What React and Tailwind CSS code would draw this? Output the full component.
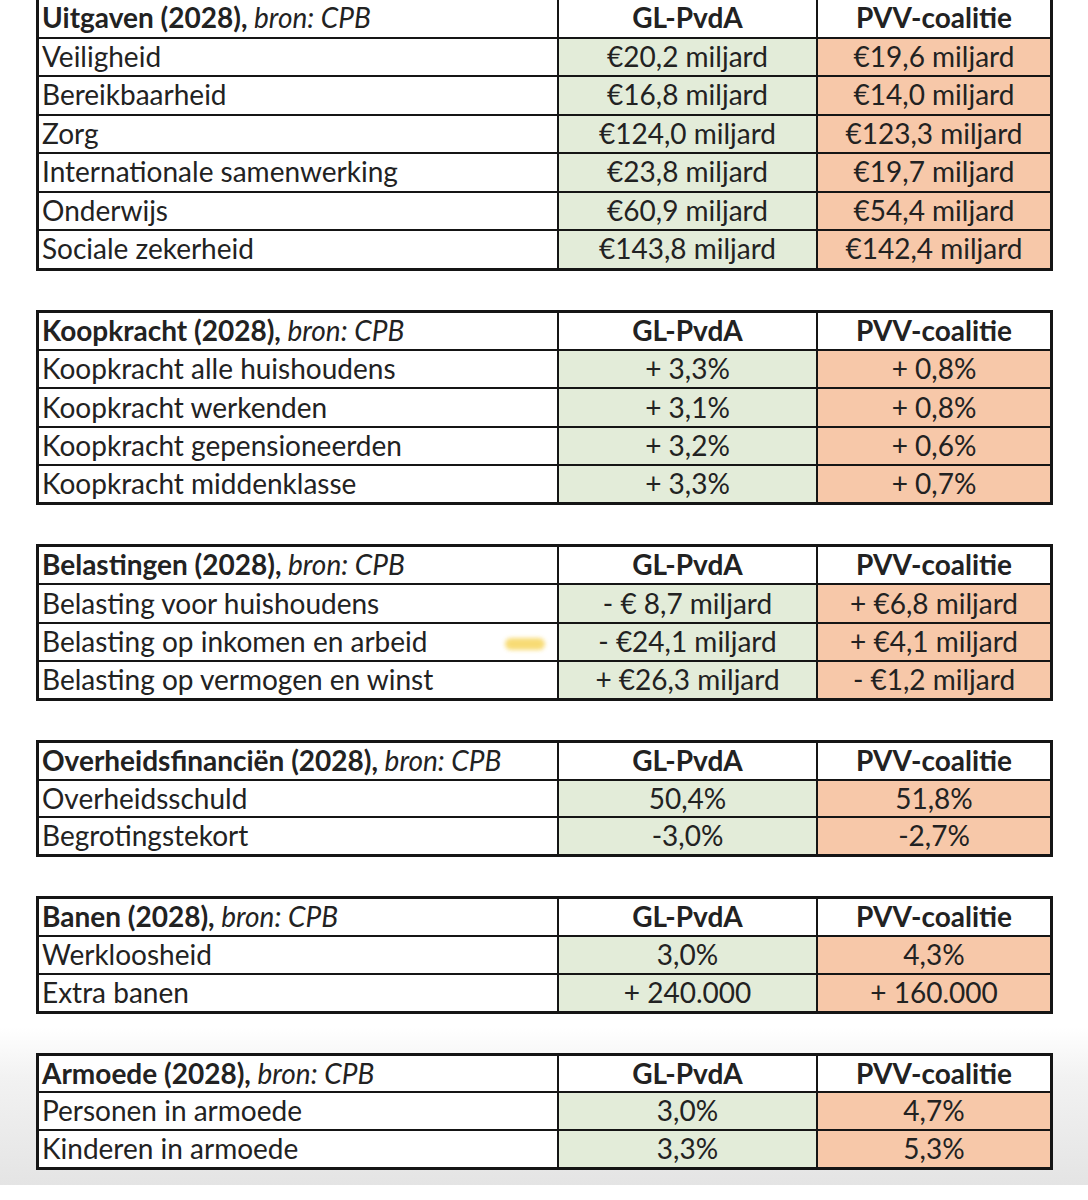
import React from "react";

const sections = [
  {
    title: "Uitgaven (2028),",
    rows: [
      ["Veiligheid", "€20,2 miljard", "€19,6 miljard"],
      ["Bereikbaarheid", "€16,8 miljard", "€14,0 miljard"],
      ["Zorg", "€124,0 miljard", "€123,3 miljard"],
      ["Internationale samenwerking", "€23,8 miljard", "€19,7 miljard"],
      ["Onderwijs", "€60,9 miljard", "€54,4 miljard"],
      ["Sociale zekerheid", "€143,8 miljard", "€142,4 miljard"],
    ],
  },
  {
    title: "Koopkracht (2028),",
    rows: [
      ["Koopkracht alle huishoudens", "+ 3,3%", "+ 0,8%"],
      ["Koopkracht werkenden", "+ 3,1%", "+ 0,8%"],
      ["Koopkracht gepensioneerden", "+ 3,2%", "+ 0,6%"],
      ["Koopkracht middenklasse", "+ 3,3%", "+ 0,7%"],
    ],
  },
  {
    title: "Belastingen (2028),",
    rows: [
      ["Belasting voor huishoudens", "- € 8,7 miljard", "+ €6,8 miljard"],
      ["Belasting op inkomen en arbeid", "- €24,1 miljard", "+ €4,1 miljard", true],
      ["Belasting op vermogen en winst", "+ €26,3 miljard", "- €1,2 miljard"],
    ],
  },
  {
    title: "Overheidsfinanciën (2028),",
    rows: [
      ["Overheidsschuld", "50,4%", "51,8%"],
      ["Begrotingstekort", "-3,0%", "-2,7%"],
    ],
  },
  {
    title: "Banen (2028),",
    rows: [
      ["Werkloosheid", "3,0%", "4,3%"],
      ["Extra banen", "+ 240.000", "+ 160.000"],
    ],
  },
  {
    title: "Armoede (2028),",
    rows: [
      ["Personen in armoede", "3,0%", "4,7%"],
      ["Kinderen in armoede", "3,3%", "5,3%"],
    ],
  },
];

const heights = {
  7: "h-[273.7px]",
  5: "h-[195.5px]",
  4: "h-[156.4px]",
  3: "h-[117.3px]",
};

function Section({ s }) {
  const n = s.rows.length + 1;
  return (
    <div
      className={`grid grid-cols-[518px_257px_232px] auto-rows-fr gap-[2px] border-[3px] border-[#151515] bg-[#151515] w-[1017px] ${heights[n]}`}
    >
      <div className="bg-white flex items-center pl-[3px] pb-[2px]">
        <span className="font-bold">{s.title}</span>
        <span className="italic">&nbsp;bron: CPB</span>
      </div>
      <div className="bg-white flex items-center justify-center font-bold pb-[2px]">GL-PvdA</div>
      <div className="bg-white flex items-center justify-center font-bold pb-[2px]">PVV-coalitie</div>
      {s.rows.map((r, i) => (
        <React.Fragment key={i}>
          <div className="bg-white flex items-center pl-[3px] pb-[2px] relative">
            {r[0]}
            {r[3] && (
              <span className="absolute right-[12px] top-[14px] w-[40px] h-[12px] rounded-full bg-[#f7d867] blur-[2px] opacity-90" />
            )}
          </div>
          <div className="bg-[#e3ecd9] flex items-center justify-center pb-[2px]">{r[1]}</div>
          <div className="bg-[#f7c8a9] flex items-center justify-center pb-[2px]">{r[2]}</div>
        </React.Fragment>
      ))}
    </div>
  );
}

export default function App() {
  return (
    <div className="w-[1088px] h-[1200px] bg-white overflow-hidden">
      <div
        className="h-[1188px] bg-[linear-gradient(to_bottom,#ffffff_0px,#ffffff_1030px,#f2f2f2_1080px,#e4e4e4_1188px)] pl-[36px] text-[#222222] text-[28px] leading-none"
        style={{ fontFamily: "Lato, 'Open Sans', sans-serif" }}
      >
        <div className="mt-[-3px] flex flex-col gap-[39.1px]">
          {sections.map((s, i) => (
            <Section key={i} s={s} />
          ))}
        </div>
      </div>
    </div>
  );
}
